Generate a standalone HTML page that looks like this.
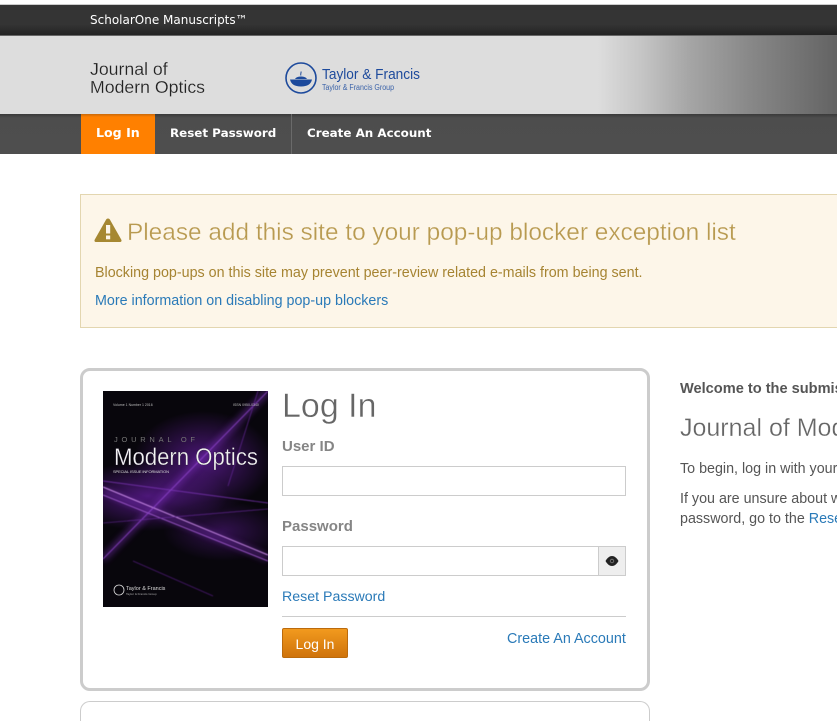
<!DOCTYPE html>
<html>
<head>
<meta charset="utf-8">
<title>Journal of Modern Optics</title>
<style>
html,body{margin:0;padding:0;background:#fff;width:837px;height:721px;overflow:hidden}
body{position:relative;font-family:"Liberation Sans",Arial,sans-serif;font-size:14px;color:#555}
.a{position:absolute;white-space:nowrap}
.r{width:157px;overflow:hidden}
a{color:#2a7ab8;text-decoration:none}
</style>
</head>
<body>
<div class="a" style="left:0;top:4px;width:837px;height:1px;background:#ccc"></div>
<div class="a" style="left:0;top:5px;width:837px;height:30px;background:linear-gradient(#343434 0,#343434 65%,#232323 100%)"></div>
<div class="a" style="left:0;top:35px;width:837px;height:1px;background:#666"></div>
<div class="a" style="left:90px;top:12px;font:12px/16px 'DejaVu Sans',sans-serif;color:#fff">ScholarOne Manuscripts™</div>

<div class="a" style="left:0;top:36px;width:837px;height:78px;background:linear-gradient(90deg,#ddd 0,#ddd 598px,#c6c6c6 640px,#a5a5a5 690px,#888 750px,#636363 837px)"></div>
<div class="a" style="left:90px;top:60px;font:17.7px/18px 'Liberation Sans',sans-serif;color:#222;-webkit-text-stroke:.2px #ddd">Journal of<br>Modern Optics</div>

<svg class="a" style="left:284px;top:60px" width="140" height="38" viewBox="0 0 140 38">
<circle cx="17" cy="18" r="15" fill="none" stroke="#1d4a9c" stroke-width="1.6"/>
<path d="M6 19.500H28C27 24 23.500 26.500 17 26.500S7 24 6 19.500Z" fill="#1d4a9c"/>
<path d="M11 19C12 17 15 16.500 17 16.500S22 17 23 19Z" fill="#1d4a9c"/>
<path d="M17 15.500C16 14 17.500 13 17 11.500" fill="none" stroke="#1d4a9c" stroke-width="1"/>
<text x="38" y="19" font-family="Liberation Sans,sans-serif" font-size="15" fill="#1d4a9c" textLength="98" lengthAdjust="spacingAndGlyphs">Taylor &amp; Francis</text>
<text x="38" y="30" font-family="Liberation Sans,sans-serif" font-size="8" fill="#3a62a8" textLength="72" lengthAdjust="spacingAndGlyphs">Taylor &amp; Francis Group</text>
</svg>

<div class="a" style="left:0;top:114px;width:837px;height:40px;background:linear-gradient(#3a3a3a 0,#4d4d4d 4px,#4e4e4e 100%)"></div>
<div class="a" style="left:81px;top:114px;width:74px;height:40px;background:linear-gradient(#c9690a 0,#ff8000 3px,#ff8000 100%)"></div>
<div class="a" style="left:291px;top:114px;width:1px;height:40px;background:#6a6a6a"></div>
<div class="a" style="left:96px;top:125px;font:bold 12.6px/16px 'DejaVu Sans',sans-serif;color:#fff">Log In</div>
<div class="a" style="left:170px;top:125px;font:bold 11.9px/16px 'DejaVu Sans',sans-serif;color:#fff">Reset Password</div>
<div class="a" style="left:307px;top:125px;font:bold 11.9px/16px 'DejaVu Sans',sans-serif;color:#fff">Create An Account</div>

<div class="a" style="left:80px;top:194px;width:756px;height:132px;background:#fdf6e9;border:1px solid #e3d6b0;border-right:0"></div>
<svg class="a" style="left:94px;top:217px" width="28" height="26" viewBox="0 0 28 26">
<path d="M14 1.500C13 1.500 12.400 2 12 2.800L.8 22.500C0 24 .7 25 2.300 25H25.700C27.300 25 28 24 27.200 22.500L16 2.800C15.600 2 15 1.500 14 1.500Z" fill="#a68832"/>
<rect x="12" y="8" width="4.200" height="8.500" fill="#fdf6e9"/>
<rect x="12" y="18.500" width="4.200" height="3.800" fill="#fdf6e9"/>
</svg>
<div class="a" style="left:127px;top:217px;font:24.4px/32px 'Liberation Sans',sans-serif;color:#b89a50;-webkit-text-stroke:.3px #fdf6e9">Please add this site to your pop-up blocker exception list</div>
<div class="a" style="left:95px;top:265px;font:14.3px/16px 'Liberation Sans',sans-serif;color:#a68432">Blocking pop-ups on this site may prevent peer-review related e-mails from being sent.</div>
<div class="a" style="left:95px;top:293px;font:14.3px/16px 'Liberation Sans',sans-serif"><a href="#">More information on disabling pop-up blockers</a></div>

<div class="a" style="left:80px;top:368px;width:564px;height:317px;border:3px solid #ccc;border-radius:10px;background:#fff"></div>

<svg class="a" style="left:103px;top:391px" width="165" height="216" viewBox="0 0 165 216">
<defs>
<radialGradient id="g1" cx="50%" cy="50%" r="50%"><stop offset="0" stop-color="#6a1fa8" stop-opacity=".7"/><stop offset="1" stop-color="#6a1fa8" stop-opacity="0"/></radialGradient>
<filter id="b1"><feGaussianBlur stdDeviation=".5"/></filter>
<filter id="b2"><feGaussianBlur stdDeviation="3.500"/></filter>
</defs>
<rect width="165" height="216" fill="#08060c"/>
<ellipse cx="100" cy="70" rx="70" ry="50" fill="url(#g1)"/>
<ellipse cx="45" cy="105" rx="80" ry="35" fill="url(#g1)"/>
<ellipse cx="120" cy="140" rx="60" ry="30" fill="url(#g1)" opacity=".6"/>
<g filter="url(#b2)" stroke="#7f2fc0" fill="none" opacity=".6">
<path d="M0 100L165 167" stroke-width="5"/>
<path d="M165 0L0 168" stroke-width="5"/>
</g>
<g filter="url(#b1)" fill="none">
<path d="M0 96L165 164" stroke="#c98ae8" stroke-width="1"/>
<path d="M0 104L165 170" stroke="#a85fd8" stroke-width=".8"/>
<path d="M165 0L0 168" stroke="#8f45cc" stroke-width=".8"/>
<path d="M0 90L165 112" stroke="#7d35b8" stroke-width=".7"/>
<path d="M0 132L165 118" stroke="#6a2aa0" stroke-width=".6"/>
<path d="M155 0L125 95" stroke="#6a2aa0" stroke-width=".6"/>
<path d="M30 170L110 205" stroke="#4a1c70" stroke-width=".8"/>
</g>
<text x="10" y="15" font-family="Liberation Sans,sans-serif" font-size="3.500" fill="#bbb">Volume 1 Number 1 2016</text>
<text x="130" y="15" font-family="Liberation Sans,sans-serif" font-size="3.500" fill="#bbb">ISSN 0950-0340</text>
<text x="11" y="51" font-family="Liberation Sans,sans-serif" font-size="7.500" fill="#777" textLength="81">JOURNAL OF</text>
<text x="11" y="74" font-family="Liberation Sans,sans-serif" font-size="24" fill="#f2f2f2" textLength="144" lengthAdjust="spacingAndGlyphs" stroke="#1a0c2a" stroke-width=".3">Modern Optics</text>
<text x="10" y="82" font-family="Liberation Sans,sans-serif" font-size="4" fill="#ddd" textLength="56">SPECIAL ISSUE INFORMATION</text>
<circle cx="16" cy="199" r="5" fill="none" stroke="#ddd" stroke-width=".8"/>
<text x="23" y="199" font-family="Liberation Sans,sans-serif" font-size="5.500" fill="#ddd">Taylor &amp; Francis</text>
<text x="23" y="204" font-family="Liberation Sans,sans-serif" font-size="3" fill="#aaa">Taylor &amp; Francis Group</text>
</svg>

<div class="a" style="left:282px;top:385px;font:34px/42px 'Liberation Sans',sans-serif;color:#666;-webkit-text-stroke:.4px #fff">Log In</div>
<div class="a" style="left:282px;top:438px;font:bold 15px/18px 'Liberation Sans',sans-serif;color:#858585">User ID</div>
<div class="a" style="left:282px;top:466px;width:342px;height:28px;border:1px solid #ccc;background:#fff"></div>
<div class="a" style="left:282px;top:518px;font:bold 15px/18px 'Liberation Sans',sans-serif;color:#858585">Password</div>
<div class="a" style="left:282px;top:546px;width:315px;height:28px;border:1px solid #ccc;background:#fff"></div>
<div class="a" style="left:598px;top:546px;width:26px;height:28px;border:1px solid #ccc;background:#eee"></div>
<svg class="a" style="left:605px;top:555px" width="14" height="12" viewBox="0 0 14 12">
<path d="M.5 6C2.500 2.500 4.800 1 7 1S11.500 2.500 13.500 6C11.500 9.500 9.200 11 7 11S2.500 9.500 .5 6Z" fill="#222"/>
<circle cx="7" cy="6" r="2.200" fill="#777"/>
<circle cx="7" cy="6" r="1.300" fill="#222"/>
</svg>
<div class="a" style="left:282px;top:589px;font:14.2px/16px 'Liberation Sans',sans-serif"><a href="#">Reset Password</a></div>
<div class="a" style="left:282px;top:616px;width:344px;height:1px;background:#ccc"></div>
<div class="a" style="left:282px;top:628px;width:64px;height:28px;border:1px solid #bb6a0c;border-radius:2px;background:linear-gradient(#f29a1e,#cf730b);color:#fff;font:14px/30px 'Liberation Sans',sans-serif;text-align:center">Log In</div>
<div class="a" style="left:507px;top:631px;font:14.35px/16px 'Liberation Sans',sans-serif"><a href="#">Create An Account</a></div>

<div class="a" style="left:80px;top:701px;width:568px;height:20px;border:1px solid #ccc;border-bottom:0;border-radius:10px 10px 0 0;background:#fff;box-sizing:content-box"></div>

<div class="a r" style="left:680px;top:381px;font:bold 14.6px/16px 'Liberation Sans',sans-serif;color:#555">Welcome to the submission site for</div>
<div class="a r" style="left:680px;top:412px;font:25px/32px 'Liberation Sans',sans-serif;color:#666;-webkit-text-stroke:.3px #fff">Journal of Modern Optics</div>
<div class="a r" style="left:680px;top:461px;font:14.3px/16px 'Liberation Sans',sans-serif;color:#555">To begin, log in with your user ID and password.</div>
<div class="a r" style="left:680px;top:489px;font:14.3px/20px 'Liberation Sans',sans-serif;color:#555">If you are unsure about whether you have an account,</div>
<div class="a r" style="left:680px;top:509px;font:14.3px/20px 'Liberation Sans',sans-serif;color:#555">password, go to the <a href="#">Reset Password</a> screen.</div>
</body>
</html>
